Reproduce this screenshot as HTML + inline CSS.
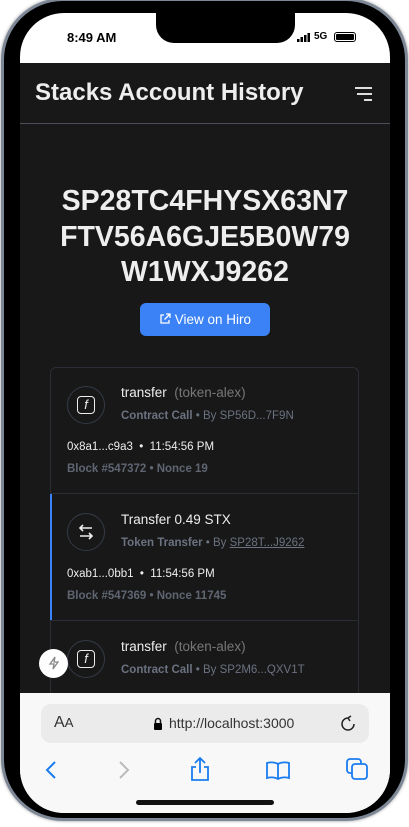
<!DOCTYPE html><html><head><style>
*{margin:0;padding:0;box-sizing:border-box}
body{width:409px;height:827px;background:#fff;position:relative;overflow:hidden;font-family:"Liberation Sans",sans-serif}
.frame{position:absolute;left:1px;top:-2px;width:407px;height:823px;border-radius:62px;background:#000;border:3px solid #7d8796;box-shadow:0 0 3px #999}
.screen{position:absolute;left:20px;top:13px;width:370px;height:800px;border-radius:44px;background:#fff;overflow:hidden}
.notch{position:absolute;left:136px;top:0;width:139px;height:30px;background:#000;border-radius:0 0 18px 18px}
.dark{position:absolute;left:0;top:50px;width:370px;height:630px;background:#181818}
.it{position:absolute;left:30px;width:309px;height:127px;border-top:1px solid #2a2d33}
.ic{position:absolute;left:17px;top:19px;width:38px;height:38px;border:1px solid #343a46;border-radius:50%;color:#eee;text-align:center}
.t{position:absolute;left:71px;font-size:13.5px;color:#eee}
.s{position:absolute;left:71px;font-size:11.5px;color:#6b7280}
.h{position:absolute;left:17px;font-size:11.5px;color:#eee}
.b{position:absolute;left:17px;font-size:11.5px;color:#5f6672;font-weight:bold}
</style></head><body>
<div class="frame"></div>
<div class="screen">
<div style="position:absolute;left:47px;top:17px;font-size:13px;font-weight:bold">8:49 AM</div>
<svg style="position:absolute;left:277px;top:20px" width="14" height="9"><rect x="0" y="6" width="2.5" height="3"/><rect x="3.5" y="4" width="2.5" height="5"/><rect x="7" y="2" width="2.5" height="7"/><rect x="10.5" y="0" width="2.5" height="9"/></svg>
<div style="position:absolute;left:294px;top:18px;font-size:10px;font-weight:bold">5G</div>
<div style="position:absolute;left:314px;top:19px;width:22px;height:10px;border:1px solid #000;border-radius:3px;padding:1px"><div style="background:#000;width:100%;height:100%;border-radius:1px"></div></div>
<div class="notch"></div>
<div class="dark">
<div style="position:absolute;left:15px;top:16px;color:#eee;font-size:24px;font-weight:bold">Stacks Account History</div>
<div style="position:absolute;left:335px;top:24px;width:17px;height:2px;background:#ddd"></div>
<div style="position:absolute;left:337px;top:30px;width:15px;height:2px;background:#ddd"></div>
<div style="position:absolute;left:344px;top:36px;width:8px;height:2px;background:#ddd"></div>
<div style="position:absolute;left:0;top:60px;width:370px;height:1px;background:#4a4f58"></div>
<div style="position:absolute;left:0;top:121px;width:370px;text-align:center;color:#eee;font-size:28.5px;font-weight:bold;line-height:35.5px">SP28TC4FHYSX63N7<br>FTV56A6GJE5B0W79<br>W1WXJ9262</div>
<div style="position:absolute;left:120px;top:240px;width:130px;height:33px;background:#3b82f6;border-radius:6px;color:#fff;font-size:13.5px;line-height:33px;text-align:center"><svg width="12" height="12" viewBox="0 0 12 12" style="vertical-align:-1px" fill="none" stroke="#fff" stroke-width="1.3"><path d="M5 2H2v8h8V7M7 1h4v4M11 1L5.5 6.5"/></svg> View on Hiro</div>
<div style="position:absolute;left:30px;top:304px;width:309px;height:330px;border:1px solid #2a2d33;border-radius:6px"></div>
<div class="it" style="top:304px;border:none">
<div class="ic"><div style="margin:9px auto;width:18px;height:18px;border:1.5px solid #eee;border-radius:4px;font-size:13px;font-style:italic;line-height:15px">f</div></div>
<div class="t" style="top:18px">transfer &nbsp;<span style="color:#777">(token-alex)</span></div>
<div class="s" style="top:43px"><b>Contract Call</b> • By SP56D...7F9N</div>
<div class="h" style="top:74px">0x8a1...c9a3 &nbsp;• &nbsp;11:54:56 PM</div>
<div class="b" style="top:96px">Block #547372 • Nonce 19</div></div>
<div class="it" style="top:430px">
<div style="position:absolute;left:0;top:0;width:2px;height:127px;background:#3b82f6"></div>
<div class="ic"><svg width="20" height="20" viewBox="0 0 20 20" style="margin-top:8px" fill="none" stroke="#eee" stroke-width="1.6"><path d="M16 6H4M7 3L4 6l3 3M4 14h12M13 11l3 3-3 3"/></svg></div>
<div class="t" style="top:18px">Transfer 0.49 STX</div>
<div class="s" style="top:43px"><b>Token Transfer</b> • By <u>SP28T...J9262</u></div>
<div class="h" style="top:74px">0xab1...0bb1 &nbsp;• &nbsp;11:54:56 PM</div>
<div class="b" style="top:96px">Block #547369 • Nonce 11745</div></div>
<div class="it" style="top:557px">
<div class="ic"><div style="margin:9px auto;width:18px;height:18px;border:1.5px solid #eee;border-radius:4px;font-size:13px;font-style:italic;line-height:15px">f</div></div>
<div class="t" style="top:18px">transfer &nbsp;<span style="color:#777">(token-alex)</span></div>
<div class="s" style="top:43px"><b>Contract Call</b> • By SP2M6...QXV1T</div></div>
<div style="position:absolute;left:19px;top:586px;width:29px;height:29px;border-radius:50%;background:#fff;text-align:center"><svg width="14" height="14" viewBox="0 0 14 14" style="margin-top:7px" fill="none" stroke="#888" stroke-width="1.3"><path d="M8 1L3 8h4l-1 5 5-7H7z"/></svg></div>
</div>
<div style="position:absolute;left:0;top:680px;width:370px;height:120px;background:#f8f8f8"></div>
<div style="position:absolute;left:21px;top:691px;width:328px;height:39px;background:#ebebeb;border-radius:10px;font-size:14px;color:#333">
<span style="position:absolute;left:13px;top:10px;font-size:16px">A<small>A</small></span>
<svg style="position:absolute;left:112px;top:13px" width="10" height="13" viewBox="0 0 10 13"><path d="M2.5 6V4a2.5 2.5 0 015 0v2" fill="none" stroke="#111" stroke-width="1.5"/><rect x="1" y="6" width="8" height="7" rx="1"/></svg>
<span style="position:absolute;left:128px;top:11px">http://localhost:3000</span>
<svg style="position:absolute;left:298px;top:11px" width="18" height="18" viewBox="0 0 18 18" fill="none" stroke="#222" stroke-width="1.5"><path d="M9 3a6 6 0 106 6M9 3l3-2M9 3l2 3"/></svg></div>
<svg style="position:absolute;top:747px;left:24px" width="14" height="20" fill="none" stroke="#1a7cf0" stroke-width="2"><path d="M11 2L3 10l8 8"/></svg>
<svg style="position:absolute;top:747px;left:97px" width="14" height="20" fill="none" stroke="#bbb" stroke-width="2"><path d="M3 2l8 8-8 8"/></svg>
<svg style="position:absolute;top:743px;left:169px" width="22" height="26" fill="none" stroke="#1a7cf0" stroke-width="1.8"><path d="M11 2v15M6 7l5-5 5 5M7 11H3v13h16V11h-4"/></svg>
<svg style="position:absolute;top:747px;left:245px" width="26" height="20" fill="none" stroke="#1a7cf0" stroke-width="1.8"><path d="M13 4v15M13 4C10 2 5 2 2 3v15c3-1 8-1 11 1c3-2 8-2 11-1V3c-3-1-8-1-11 1z"/></svg>
<svg style="position:absolute;top:745px;left:326px" width="22" height="22" fill="none" stroke="#1a7cf0" stroke-width="1.8"><rect x="1" y="1" width="14" height="14" rx="3"/><rect x="6" y="6" width="15" height="15" rx="3" fill="#f8f8f8"/></svg>
<div style="position:absolute;top:787px;left:116px;width:138px;height:5px;background:#111;border-radius:3px"></div>
</div>
</body></html>
